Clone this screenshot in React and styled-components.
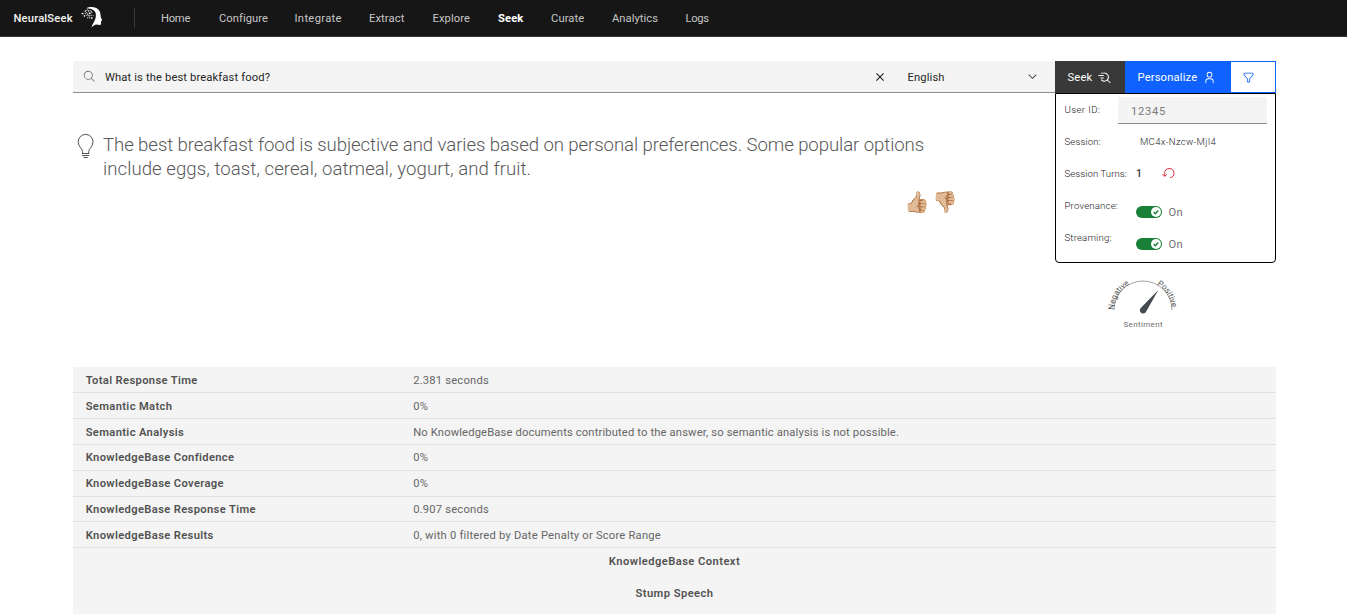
import React from "react";
import styled, { createGlobalStyle } from "styled-components";

const GlobalStyle = createGlobalStyle`
  * { box-sizing: border-box; }
  html, body { margin: 0; height: 100%; overflow: hidden; background: #fff; }
  body { font-family: Roboto, "Liberation Sans", sans-serif; font-size: 11.2px; color: #161616; }
  button, input { font: inherit; border: 0; margin: 0; padding: 0; border-radius: 0; background: none; }
`;

const Page = styled.div`
  height: 614px;
  overflow: hidden;
`;

const Header = styled.header`
  display: flex;
  align-items: center;
  height: 37px;
  padding-left: 13.5px;
  background: #161616;
  border-bottom: 1px solid #393939;
`;

const Brand = styled.div`
  display: flex;
  align-items: center;
  width: 121px;
  height: 20px;
  gap: 8px;
  border-right: 1px solid #393939;
  color: #f4f4f4;
  font-weight: 500;
  letter-spacing: 0.18px;
`;

const BrandLogo = styled.svg`
  width: 22px;
  height: 22px;
  flex: none;
  transform: translateY(-1px);
`;

const Nav = styled.nav`
  display: flex;
  padding-left: 26.5px;
`;

const NavLink = styled.a`
  width: ${(p) => p.$width}px;
  letter-spacing: ${(p) => p.$tracking}px;
  color: ${(p) => (p.$active ? "#fff" : "#c6c6c6")};
  font-weight: ${(p) => (p.$active ? 700 : 400)};
  white-space: nowrap;
`;

const Main = styled.main`
  width: 1203px;
  margin-left: 73px;
  padding-top: 24px;
`;

const Workspace = styled.section`
  display: flex;
  height: 306px;
`;

const AnswerColumn = styled.div`
  width: 982px;
`;

const SideColumn = styled.aside`
  width: 221px;
`;

const SearchBar = styled.div`
  display: flex;
  align-items: center;
  height: 32px;
  padding: 0 16px 0 10px;
  background: #f4f4f4;
  border-bottom: 1px solid #8d8d8d;
`;

const SearchInput = styled.input`
  flex: 1;
  margin-left: 9px;
  padding-top: 2px;
  color: #262626;
  letter-spacing: 0.13px;
  outline: none;
`;

const LanguageSelect = styled.div`
  display: flex;
  align-items: center;
  justify-content: space-between;
  width: 131.5px;
  margin-left: 20px;
  color: #262626;
  letter-spacing: 0.13px;
`;

const LanguageName = styled.span`
  padding-top: 2px;
`;

const Icon = styled.svg`
  display: block;
  flex: none;
  width: ${(p) => p.$size}px;
  height: ${(p) => p.$size}px;
  fill: ${(p) => p.$color || "currentColor"};
`;

const ButtonRow = styled.div`
  display: flex;
  height: 32px;
`;

const ActionButton = styled.button`
  display: flex;
  align-items: center;
  gap: ${(p) => p.$gap}px;
  width: ${(p) => p.$width}px;
  padding-left: 12.5px;
  background: ${(p) => p.$fill};
  color: #fff;
  letter-spacing: 0.16px;
`;

const FilterButton = styled.button`
  display: flex;
  align-items: center;
  flex: 1;
  padding-left: 11px;
  border: 1px solid #0f62fe;
  border-left: 0;
  color: #0f62fe;
`;

const Settings = styled.div`
  height: 170px;
  padding: 0 8px;
  border: 1px solid #000;
  border-radius: 0 0 4px 4px;
  background: #fff;
`;

const SettingRow = styled.div`
  display: flex;
  align-items: center;
  height: 32px;
`;

const SettingLabel = styled.label`
  width: ${(p) => p.$width}px;
  padding: 0 0 2px 0.5px;
  font-size: 9.6px;
  font-weight: 300;
  letter-spacing: ${(p) => p.$tracking}px;
  color: #161616;
  white-space: nowrap;
`;

const UserInput = styled.input`
  width: 149px;
  height: 27px;
  padding: 3px 0 0 13px;
  background: #f4f4f4;
  border-bottom: 1px solid #8d8d8d;
  color: #7a7a7a;
  letter-spacing: 0.7px;
  outline: none;
`;

const SessionValue = styled.span`
  padding-bottom: 2px;
  font-size: 9.6px;
  font-weight: 300;
  letter-spacing: 0.3px;
  color: #262626;
`;

const TurnCount = styled.span`
  width: 26px;
  padding-bottom: 1px;
  font-size: 10.5px;
  font-weight: 500;
  color: #393939;
`;

const ResetIcon = styled.svg`
  margin-bottom: 2px;
`;

const ToggleField = styled.div`
  display: flex;
  align-items: center;
  gap: 6.5px;
  padding-top: 12px;
  color: #6f6f6f;
  letter-spacing: 0.2px;
`;

const ToggleTrack = styled.span`
  display: flex;
  align-items: center;
  justify-content: flex-end;
  width: 26px;
  height: 12px;
  padding-right: 1px;
  border-radius: 6px;
  background: #198038;
`;

const Gauge = styled.svg`
  display: block;
  width: 80px;
  height: 60px;
  margin: 10px 0 0 47.5px;
  font-family: Roboto, sans-serif;
`;

const Answer = styled.div`
  display: flex;
  padding: 40px 0 0 4px;
`;

const AnswerText = styled.p`
  width: 850px;
  margin: 0 0 0 9px;
  font-size: 18.6px;
  line-height: 24px;
  font-weight: 300;
  color: #585858;
`;

const AnswerLine = styled.span`
  display: block;
  letter-spacing: ${(p) => p.$tracking}px;
`;

const Feedback = styled.div`
  display: flex;
  gap: 2px;
  padding: 8px 0 0 831px;
  font-size: 20.5px;
  line-height: 26px;
`;

const Results = styled.section`
  height: 247px;
  padding-top: 0.4px;
  background: #f4f4f4;
`;

const ResultRow = styled.div`
  display: grid;
  grid-template-columns: 327.5px 1fr;
  align-items: center;
  height: 25.83px;
  padding: 1.2px 0 0 12.7px;
  border-bottom: 1px solid #e0e0e0;
`;

const ResultName = styled.span`
  font-weight: 600;
  letter-spacing: 0.35px;
  color: #525252;
`;

const ResultValue = styled.span`
  color: #666;
  letter-spacing: ${(p) => p.$tracking || 0.2}px;
`;

const SectionTitle = styled.h4`
  margin: 0;
  padding-top: 6px;
  height: 32px;
  font-size: 11.2px;
  line-height: 15px;
  font-weight: 600;
  letter-spacing: 0.43px;
  text-align: center;
  color: #525252;
`;

const navItems = [
  ["Home", 58, -0.25],
  ["Configure", 75.5, 0.05],
  ["Integrate", 74.5, 0.33],
  ["Extract", 63.5, 0.1],
  ["Explore", 65.5, 0.1],
  ["Seek", 53, 0.1],
  ["Curate", 61, 0.1],
  ["Analytics", 73.5, 0.05],
  ["Logs", 30, -0.3],
];

const results = [
  ["Total Response Time", "2.381 seconds"],
  ["Semantic Match", "0%"],
  ["Semantic Analysis", "No KnowledgeBase documents contributed to the answer, so semantic analysis is not possible.", 0.15],
  ["KnowledgeBase Confidence", "0%"],
  ["KnowledgeBase Coverage", "0%"],
  ["KnowledgeBase Response Time", "0.907 seconds"],
  ["KnowledgeBase Results", "0, with 0 filtered by Date Penalty or Score Range", 0.22],
];

const HeadLogo = () => (
  <BrandLogo viewBox="0 0 22 22">
    <path fill="#fff" d="M5 2.200C9 .2 15 .2 18 4.200c1.800 2.500 1.300 4.800 1.900 7l1.300 3.300-1.200.5.1 3.200-1 .9-3.900-.6c-1.500.2-3 1.200-4.600 2.900.4-2.600 1.900-4.500 3.200-7.200 1.300-2.800 1.500-6.200.3-8.400C12.500 3.200 8.600 2.200 5 2.200z" />
    <g fill="none" stroke="#fff" strokeWidth="0.8" strokeDasharray="1.200 1">
      <path d="M4.500 4.500l6.500.2M1.500 7.700h5l5-1.200M3 10l5-.8 4.500.4M6 11.800l5.500.2M6.500 3.200l2 3.500M10.500 5l-2 4.500M5 6l4 6" />
    </g>
    <g fill="#fff">
      <circle cx="1.300" cy="7.600" r="0.800" />
      <circle cx="3.300" cy="10" r="0.700" />
      <circle cx="4.200" cy="5.300" r="0.700" />
      <circle cx="10.800" cy="12" r="0.800" />
      <circle cx="8.500" cy="7.300" r="0.800" />
    </g>
  </BrandLogo>
);

const Toggle = () => (
  <ToggleField>
    <ToggleTrack>
      <svg width="10" height="10" viewBox="0 0 10 10">
        <circle cx="5" cy="5" r="5" fill="#fff" />
        <path d="M2.700 5.100l1.600 1.600 3-3.200" fill="none" stroke="#198038" strokeWidth="1.400" />
      </svg>
    </ToggleTrack>
    On
  </ToggleField>
);

export default function App() {
  return (
    <Page>
      <GlobalStyle />
      <Header>
        <Brand>
          NeuralSeek
          <HeadLogo />
        </Brand>
        <Nav>
          {navItems.map(([name, width, tracking]) => (
            <NavLink key={name} $width={width} $tracking={tracking} $active={name === "Seek"}>
              {name}
            </NavLink>
          ))}
        </Nav>
      </Header>
      <Main>
        <Workspace>
          <AnswerColumn>
            <SearchBar>
              <Icon $size={13} $color="#6f6f6f" viewBox="0 0 32 32">
                <path d="M29,27.586l-7.552-7.552a11.018,11.018,0,1,0-1.414,1.414L27.586,29ZM4,13a9,9,0,1,1,9,9A9.010,9.010,0,0,1,4,13Z" />
              </Icon>
              <SearchInput defaultValue="What is the best breakfast food?" />
              <Icon $size={16} $color="#161616" viewBox="0 0 32 32">
                <path d="M17.414 16L24 9.414 22.586 8 16 14.586 9.414 8 8 9.414 14.586 16 8 22.586 9.414 24 16 17.414 22.586 24 24 22.586 17.414 16z" />
              </Icon>
              <LanguageSelect>
                <LanguageName>English</LanguageName>
                <Icon $size={13} $color="#393939" viewBox="0 0 16 16">
                  <path d="M8 11L3 6 3.700 5.300 8 9.600 12.300 5.300 13 6z" />
                </Icon>
              </LanguageSelect>
            </SearchBar>
            <Answer>
              <svg width="17" height="27" viewBox="0 0 17 27" fill="none" stroke="#525252" strokeWidth="1">
                <path d="M5.500 20.300v-1.800c0-2.600-4.300-5-4.300-9.700a7.400 7.400 0 0 1 14.800 0c0 4.700-4.300 7.100-4.300 9.700v1.800" />
                <path d="M5 20.500h7.200M5 22.500h7.200M6.500 24.500h4.200" />
              </svg>
              <AnswerText>
                <AnswerLine $tracking={-0.085}>
                  The best breakfast food is subjective and varies based on personal preferences. Some popular options
                </AnswerLine>
                <AnswerLine $tracking={0.055}>include eggs, toast, cereal, oatmeal, yogurt, and fruit.</AnswerLine>
              </AnswerText>
            </Answer>
            <Feedback>
              <span>👍🏼</span>
              <span>👎🏼</span>
            </Feedback>
          </AnswerColumn>
          <SideColumn>
            <ButtonRow>
              <ActionButton $width={70} $gap={5.5} $fill="#393939">
                Seek
                <Icon $size={13} viewBox="0 0 32 32">
                  <path d="M7 4h9a11 11 0 0 1 8.500 18L31 28.500 29.500 30 23 23.500A11 11 0 0 1 7 22l1.800-1.500A8.800 8.800 0 1 0 16 6.200H7zM1 10h13v2.200H1zM6 16h8v2.200H6z" />
                </Icon>
              </ActionButton>
              <ActionButton $width={106} $gap={6} $fill="#0f62fe">
                Personalize
                <Icon $size={13} viewBox="0 0 32 32">
                  <path d="M16 4a5 5 0 1 1-5 5 5 5 0 0 1 5-5m0-2a7 7 0 1 0 7 7A7 7 0 0 0 16 2zM26 30H24V25a5 5 0 0 0-5-5H13a5 5 0 0 0-5 5v5H6V25a7 7 0 0 1 7-7h6a7 7 0 0 1 7 7z" />
                </Icon>
              </ActionButton>
              <FilterButton aria-label="Filter">
                <Icon $size={13} viewBox="0 0 32 32">
                  <path d="M18,28H14a2,2,0,0,1-2-2V18.410L4.590,11A2,2,0,0,1,4,9.590V6A2,2,0,0,1,6,4H26a2,2,0,0,1,2,2V9.590A2,2,0,0,1,27.410,11L20,18.410V26A2,2,0,0,1,18,28ZM6,6V9.590l8,8V26h4V17.590l8-8V6Z" />
                </Icon>
              </FilterButton>
            </ButtonRow>
            <Settings>
              <SettingRow>
                <SettingLabel $width={54} $tracking={0.4}>User ID:</SettingLabel>
                <UserInput defaultValue="12345" />
              </SettingRow>
              <SettingRow>
                <SettingLabel $width={76} $tracking={0.15}>Session:</SettingLabel>
                <SessionValue>MC4x-Nzcw-MjI4</SessionValue>
              </SettingRow>
              <SettingRow>
                <SettingLabel $width={72} $tracking={0.08}>Session Turns:</SettingLabel>
                <TurnCount>1</TurnCount>
                <ResetIcon width="13" height="13" viewBox="0 0 13 13" fill="none" stroke="#da1e28" strokeWidth="0.9">
                  <path d="M2.700 9V6.200a4.600 4.600 0 1 1 5.300 4.500M.6 7.200l2.100 2.300 2.200-2.300" />
                </ResetIcon>
              </SettingRow>
              <SettingRow>
                <SettingLabel $width={72} $tracking={0.18}>Provenance:</SettingLabel>
                <Toggle />
              </SettingRow>
              <SettingRow>
                <SettingLabel $width={72} $tracking={0.18}>Streaming:</SettingLabel>
                <Toggle />
              </SettingRow>
            </Settings>
            <Gauge viewBox="0 0 80 60">
              <defs>
                <path id="dial" d="M11 37A29 29 0 0 1 69 37" />
              </defs>
              <path d="M11 37A29 29 0 0 1 69 37" fill="none" stroke="#8d8d8d" strokeWidth="0.8" />
              <text fontSize="8" fill="#525252">
                <textPath href="#dial" startOffset="0">Negative</textPath>
              </text>
              <text fontSize="8" fill="#525252">
                <textPath href="#dial" startOffset="60">Positive</textPath>
              </text>
              <path d="M55.500 16.800L43.200 38.500a3.300 3.300 0 1 1-5.400-3.600z" fill="#454a52" />
              <text x="40.200" y="54" fontSize="8" letterSpacing="0.35" textAnchor="middle" fill="#6f6f6f">Sentiment</text>
            </Gauge>
          </SideColumn>
        </Workspace>
        <Results>
          {results.map(([name, value, tracking]) => (
            <ResultRow key={name}>
              <ResultName>{name}</ResultName>
              <ResultValue $tracking={tracking}>{value}</ResultValue>
            </ResultRow>
          ))}
          <SectionTitle>KnowledgeBase Context</SectionTitle>
          <SectionTitle>Stump Speech</SectionTitle>
        </Results>
      </Main>
    </Page>
  );
}
